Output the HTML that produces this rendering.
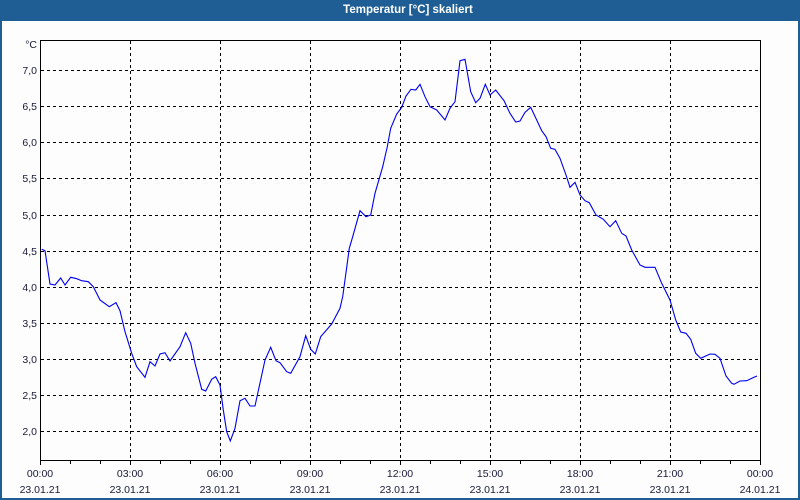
<!DOCTYPE html>
<html><head><meta charset="utf-8"><style>
html,body{margin:0;padding:0;width:800px;height:500px;overflow:hidden;background:#fff}
svg{display:block}
text{font-family:"Liberation Sans",sans-serif;font-size:10.5px}
</style></head><body>
<svg width="800" height="500" viewBox="0 0 800 500" xmlns="http://www.w3.org/2000/svg">
<rect x="0" y="0" width="800" height="500" fill="#1e5e94"/>
<rect x="2" y="21" width="796" height="477" fill="#fcfdfc"/>
<text x="408" y="13" fill="#fff" font-weight="bold" text-anchor="middle" style="font-size:11.5px">Temperatur [°C] skaliert</text>
<g stroke="#000" stroke-width="1" stroke-dasharray="3,3" shape-rendering="crispEdges">
<path d="M130.5 41V460M220.5 41V460M310.5 41V460M400.5 41V460M490.5 41V460M580.5 41V460M670.5 41V460"/>
<path d="M41 70.5H760M41 106.5H760M41 142.5H760M41 178.5H760M41 215.5H760M41 251.5H760M41 287.5H760M41 323.5H760M41 359.5H760M41 395.5H760M41 431.5H760"/>
</g>
<g stroke="#000" stroke-width="1" fill="none" shape-rendering="crispEdges">
<path d="M40.5 40V460.5M40 40.5H760.5V460.5M40 460.5H761"/>
<path d="M40.5 460v5M70.5 460v4M100.5 460v4M130.5 460v5M160.5 460v4M190.5 460v4M220.5 460v5M250.5 460v4M280.5 460v4M310.5 460v5M340.5 460v4M370.5 460v4M400.5 460v5M430.5 460v4M460.5 460v4M490.5 460v5M520.5 460v4M550.5 460v4M580.5 460v5M610.5 460v4M640.5 460v4M670.5 460v5M700.5 460v4M730.5 460v4M760.5 460v5"/>
</g>
<g fill="#1a1a3a" text-anchor="end">
<text x="37" y="48">°C</text>
<text x="37" y="74">7,0</text><text x="37" y="110">6,5</text><text x="37" y="146">6,0</text>
<text x="37" y="182">5,5</text><text x="37" y="219">5,0</text><text x="37" y="255">4,5</text>
<text x="37" y="291">4,0</text><text x="37" y="327">3,5</text><text x="37" y="363">3,0</text>
<text x="37" y="399">2,5</text><text x="37" y="435">2,0</text>
</g>
<g fill="#1a1a3a" text-anchor="middle">
<text x="40" y="477">00:00</text><text x="40" y="493">23.01.21</text>
<text x="130" y="477">03:00</text><text x="130" y="493">23.01.21</text>
<text x="220" y="477">06:00</text><text x="220" y="493">23.01.21</text>
<text x="310" y="477">09:00</text><text x="310" y="493">23.01.21</text>
<text x="400" y="477">12:00</text><text x="400" y="493">23.01.21</text>
<text x="490" y="477">15:00</text><text x="490" y="493">23.01.21</text>
<text x="580" y="477">18:00</text><text x="580" y="493">23.01.21</text>
<text x="670" y="477">21:00</text><text x="670" y="493">23.01.21</text>
<text x="760" y="477">00:00</text><text x="760" y="493">24.01.21</text>
</g>
<polyline fill="none" stroke="#0000ee" stroke-width="1.1" points="
41.7,249.3 45,250.7 50,284 55,285 60.7,278 65,285 70.7,277.3 76.7,278.7 81.7,280.7 88.3,281.7 93.3,286.7 100,300 109.3,306.7 116,302.7 120,310.7 125,331.7 131.7,353.3 136.7,366.7 145,377.3 150,361.7 155,366 160,354 165,352.7 170,361 180,346.7 185.7,332.7 190.7,343.3 195,363.3 201.7,389.3 205.7,391 211.7,379.3 215.7,376.7 220,385 223.3,410 226.7,431.7 230.3,441 235,428.3 240,400.7 245,398.3 250,406 255,406 265,360 270.7,347.3 276,360.7 280,362.7 286.7,371.7 290.7,373.3 300,356.7 305.7,335.7 310.7,349.3 315.3,354 320.7,336.7 331.7,324 340,308.3 342.7,296.7 349.3,248.3 352.7,236.7 360,210.7 366,216.7 370.7,215 375,193.3 382.7,166.7 387.3,146.7 390.7,128.3 396.7,114 401.7,107.3 406,96 411,89.3 415.7,90 420,84.3 425,96.7 430,106.7 436.7,110 445,120 450,108.3 455,101.7 460,60.7 465,59.3 470.7,91.7 475.7,102.7 480,98.3 485.3,84.3 490,95 495.7,90 504,100.7 510,113.3 515.7,122 520,121 525,112.3 530.7,107.3 536.7,120 541.7,130.7 546,136.7 550.7,148.3 555,149.3 560,158.3 566,175 570,187.3 575,182.3 580,195 585,200.7 589.3,202.7 596,215 603.3,219.3 610,226.7 615.7,220.7 621.7,233.3 626,236 631.7,250 640,265 645,267.3 655,267.3 661.7,283.3 670,300 675.7,320 680.7,332 686,333.3 690.7,339.3 695.7,353.3 700.7,358.3 710,354 715,354.3 720,358.3 726,376 731.7,383.3 734,384.3 740,381 746.7,380.7 754,377.3 757,376"/>
</svg>
</body></html>
